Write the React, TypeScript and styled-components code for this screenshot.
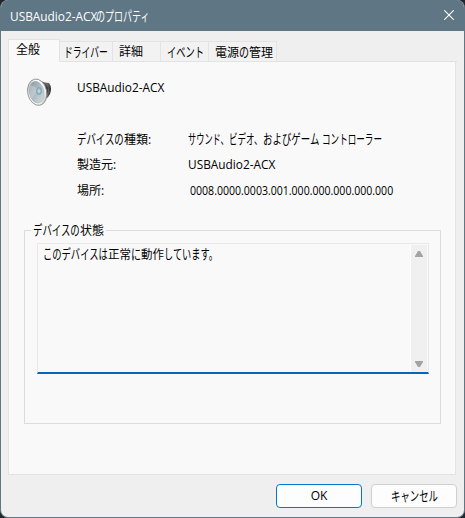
import React from 'react';
import styled, { createGlobalStyle } from 'styled-components';

const GlobalStyle = createGlobalStyle`
  * { box-sizing: border-box; }
  body { margin: 0; background: #20262a; overflow: hidden; }
`;

const Window = styled.div`
  width: 465px;
  height: 518px;
  display: flex;
  flex-direction: column;
  border: 1px solid #5f7685;
  border-top: 0;
  border-radius: 8px;
  overflow: hidden;
  background: #efefef;
  color: #000;
  font: 12px/18px "Open Sans", "Noto Sans CJK JP", sans-serif;
`;

const TitleBar = styled.header`
  height: 31px;
  flex: none;
  display: flex;
  align-items: center;
  justify-content: space-between;
  padding: 0 10px 0 9px;
  background: #5f7685;
  color: #fff;
`;

const CloseButton = styled.button`
  width: 10px;
  height: 10px;
  margin-top: -1px;
  padding: 0;
  border: 0;
  background: none;
  display: flex;
`;

/* A run of text condensed or widened to a given advance width. */
const Run = styled.span<{ $width: number; $scale: number; $size: number }>`
  display: inline-block;
  width: ${p => p.$width}px;
  font-size: ${p => p.$size}px;
  white-space: pre;
  vertical-align: top;

  > span {
    display: inline-block;
    transform: scaleX(${p => p.$scale});
    transform-origin: 0 50%;
  }
`;

const Line = styled.span`
  display: flex;
  align-items: baseline;
  white-space: pre;
  height: 18px;
`;

/* Text, wanted advance width, advance width at 12px. */
type Part = [text: string, width: number, natural: number];

/* Kana are set taller than the kanji and condensed. */
const KANA_SIZE = 13.5;
const isKana = (text: string) => /^[\u3001-\u30ff ]+$/.test(text);

const Label = ({ parts }: { parts: Part[] }) => (
  <Line>
    {parts.map(([text, width, natural]) => {
      const size = isKana(text) ? KANA_SIZE : 12;
      return (
        <Run key={text} $width={width} $size={size} $scale={(width / natural) * (12 / size)}>
          <span>{text}</span>
        </Run>
      );
    })}
  </Line>
);

const Tabs = styled.nav`
  height: 31px;
  flex: none;
  display: flex;
  align-items: flex-end;
  padding: 0 7px;
`;

const Tab = styled.div<{ $width: number; $active?: boolean; $indent: number }>`
  width: ${p => p.$width}px;
  height: ${p => (p.$active ? 23 : 21)}px;
  flex: none;
  padding: 1px 0 0 ${p => p.$indent}px;
  border: 1px solid #e3e3e3;
  border-left-width: ${p => (p.$active ? 1 : 0)}px;
  border-bottom-color: ${p => (p.$active ? '#f9f9f9' : '#e3e3e3')};
  background: ${p => (p.$active ? '#f9f9f9' : '#f2f2f2')};
`;

const TabRule = styled.div`
  flex: 1;
  height: 1px;
  background: #e0e0e0;
`;

const Page = styled.main`
  margin: 0 9px 0 7px;
  width: 448px;
  height: 413px;
  flex: none;
  border: 1px solid #e3e3e3;
  border-top: 0;
  background: #f9f9f9;
  padding: 17px 14px 0 15px;
`;

const DeviceHeading = styled.div`
  display: flex;
  height: 51px;
  > svg { margin: -3px 21px 0 0; flex: none; }
`;

const Details = styled.dl`
  display: grid;
  grid-template-columns: 111px 1fr;
  grid-auto-rows: 26px;
  margin: 0 0 0 53px;
  height: 91px;
  dt, dd { margin: 0; }
`;

const Serial = styled.dd`
  padding-left: 2px;
`;

const Group = styled.fieldset`
  width: 417px;
  height: 203px;
  margin: 0;
  padding: 4px 11px 0 12px;
  border: 1px solid #dcdcdc;
  min-width: 0;
`;

const Legend = styled.legend`
  padding: 0 2px;
  margin-left: -6px;
  height: 18px;
`;

const StatusBox = styled.div`
  width: 392px;
  height: 131px;
  display: flex;
  justify-content: space-between;
  border: 1px solid #e9e9e9;
  border-bottom: 2px solid #0067c0;
  padding: 1px 1px 0 5px;
`;

const Scrollbar = styled.div`
  width: 17px;
  border-left: 1px solid #fff;
  background: #f0f0f0;
  display: flex;
  flex-direction: column;
  align-items: center;
  justify-content: space-between;
  padding: 6px 0 5px;
`;

const Footer = styled.footer`
  flex: 1;
  display: flex;
  justify-content: flex-end;
  gap: 9px;
  padding: 9px 7px 0;
`;

const Button = styled.button<{ $primary?: boolean }>`
  width: 86px;
  height: 24px;
  padding: 0;
  display: flex;
  align-items: center;
  justify-content: center;
  border: 1px solid ${p => (p.$primary ? '#0078d4' : '#d0d0d0')};
  border-radius: 4px;
  background: #fdfdfd;
  color: #000;
  font: inherit;
`;

const SpeakerIcon = () => (
  <svg width="32" height="32" viewBox="0 0 32 32">
    <defs>
      <linearGradient id="magnet" x2="0" y2="1">
        <stop stopColor="#8b8b8b" /><stop offset=".35" stopColor="#383838" />
        <stop offset=".7" stopColor="#555" /><stop offset="1" stopColor="#999" />
      </linearGradient>
      <linearGradient id="rim" x2="1" y2="1">
        <stop stopColor="#a3a3a3" /><stop offset=".3" stopColor="#fff" />
        <stop offset=".75" stopColor="#f0f0f0" /><stop offset="1" stopColor="#777" />
      </linearGradient>
      <linearGradient id="cone" x2=".8" y2="1">
        <stop stopColor="#84929a" /><stop offset=".5" stopColor="#aab9c1" />
        <stop offset="1" stopColor="#d0dadd" />
      </linearGradient>
      <radialGradient id="cap"><stop stopColor="#d5eaf3" /><stop offset="1" stopColor="#7798a8" /></radialGradient>
    </defs>
    <path d="M13 3.5l8 3 4 .6q2.3 2.6 2.1 6.6t-3.3 7.8l-3.8 1.5L16 28z" fill="url(#magnet)" />
    <path d="M23 7.5q3.5 7.5-1 15" fill="none" stroke="#777" strokeWidth=".7" />
    <ellipse cx="13.2" cy="16.2" rx="9.5" ry="13.3" transform="rotate(-12 13.2 16.2)" fill="url(#rim)" stroke="#858585" strokeWidth=".8" />
    <ellipse cx="12.6" cy="16.2" rx="7.4" ry="11" transform="rotate(-12 12.6 16.2)" fill="url(#cone)" stroke="#9ba4a8" strokeWidth=".4" />
    <path d="M6.5 9q5 2 8 4l-7 10q-3.5-7-1-14" fill="#dce4e7" opacity=".4" />
    <ellipse cx="15" cy="15" rx="2.8" ry="3.8" fill="url(#cap)" />
  </svg>
);

const Arrow = ({ down }: { down?: boolean }) => (
  <svg width="8" height="6" viewBox="0 0 8 6">
    <path d={down ? 'M0 0h8v1L5 6H3L0 1z' : 'M0 6h8V5L5 0H3L0 5z'} fill="#a3a3a3" />
  </svg>
);

export default function App() {
  return (
    <>
      <GlobalStyle />
      <Window>
        <TitleBar>
          <Label parts={[['USBAudio2-ACX', 86, 87], ['のプロパティ', 54, 72]]} />
          <CloseButton aria-label="閉じる">
            <svg width="10" height="10" viewBox="0 0 10 10">
              <path d="M.3.3l9.4 9.4M9.7.3L.3 9.7" stroke="#fff" strokeWidth="1.1" />
            </svg>
          </CloseButton>
        </TitleBar>
        <Tabs>
          <Tab $active $width={52} $indent={7}><Label parts={[['全般', 24, 24]]} /></Tab>
          <Tab $width={53} $indent={4}><Label parts={[['ドライバー', 44, 60]]} /></Tab>
          <Tab $width={48} $indent={6}><Label parts={[['詳細', 24, 24]]} /></Tab>
          <Tab $width={48} $indent={6}><Label parts={[['イベント', 37, 48]]} /></Tab>
          <Tab $width={68} $indent={6}>
            <Label parts={[['電源', 24, 24], ['の', 10, 12], ['管理', 24, 24]]} />
          </Tab>
          <TabRule />
        </Tabs>
        <Page>
          <DeviceHeading>
            <SpeakerIcon />
            <Label parts={[['USBAudio2-ACX', 86, 87]]} />
          </DeviceHeading>
          <Details>
            <dt><Label parts={[['デバイスの', 47, 60], ['種類:', 27, 27]]} /></dt>
            <dd>
              <Label parts={[['サウンド、', 41, 60], ['ビデオ、', 34, 48], ['およびゲーム ', 59, 75], ['コントローラー', 60, 84]]} />
            </dd>
            <dt><Label parts={[['製造元:', 39, 39]]} /></dt>
            <dd><Label parts={[['USBAudio2-ACX', 86, 87]]} /></dd>
            <dt><Label parts={[['場所:', 27, 27]]} /></dt>
            <Serial><Label parts={[['0008.0000.0003.001.000.000.000.000.000', 204, 232]]} /></Serial>
          </Details>
          <Group>
            <Legend><Label parts={[['デバイスの', 47, 60], ['状態', 24, 24]]} /></Legend>
            <StatusBox>
              <Label parts={[['このデバイスは', 65, 84], ['正常', 23, 24], ['に', 10, 12], ['動作', 23, 24], ['しています。', 55, 72]]} />
              <Scrollbar><Arrow /><Arrow down /></Scrollbar>
            </StatusBox>
          </Group>
        </Page>
        <Footer>
          <Button $primary><Label parts={[['OK', 17, 17]]} /></Button>
          <Button><Label parts={[['キャンセル', 47, 60]]} /></Button>
        </Footer>
      </Window>
    </>
  );
}
